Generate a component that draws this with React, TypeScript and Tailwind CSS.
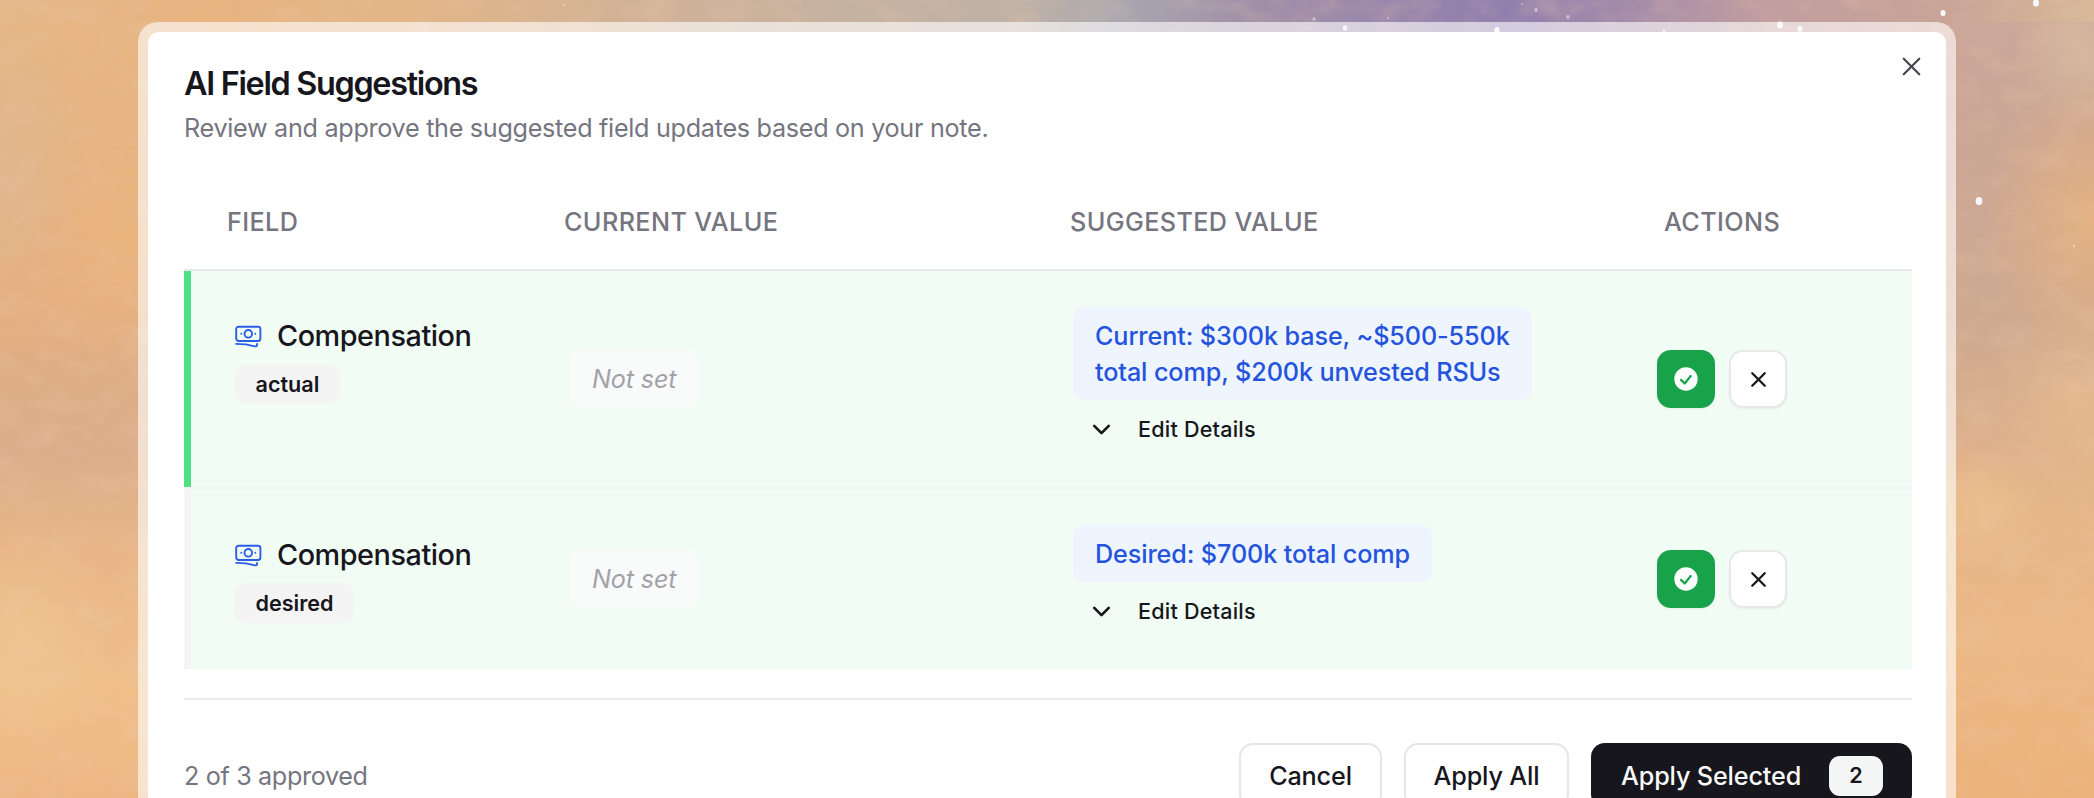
import React from "react";
import { ChevronDown, X } from "lucide-react";

const COLUMNS = "grid grid-cols-[380px_503px_584px_261px]";

type Suggestion = { tag: string; lines: string[]; selected: boolean };

const suggestions: Suggestion[] = [
  {
    tag: "actual",
    lines: ["Current: $300k base, ~$500-550k", "total comp, $200k unvested RSUs"],
    selected: true,
  },
  { tag: "desired", lines: ["Desired: $700k total comp"], selected: false },
];

const stars = [
  [1314, 19, 1.8, 0.5], [1345, 28, 2.8, 0.8], [1388, 18, 1.2, 0.4], [1497, 30, 3, 1], [1536, 10, 2, 0.5],
  [1568, 17, 2, 0.5], [1522, 4, 1, 0.4], [1664, 31, 1.8, 0.6], [1780, 25, 3.6, 1], [1800, 29, 2.8, 1],
  [1943, 13, 3, 1], [2036, 3, 3.6, 1], [1979, 201, 4, 1], [564, 5, 0.8, 1], [2074, 246, 1.5, 0.4],
];

function Backdrop() {
  return (
    <svg className="absolute inset-0" width="2094" height="798" viewBox="0 0 2094 798">
      <defs>
        <linearGradient id="top" x1="0" x2="1">
          <stop offset="0" stopColor="#e6b88a" />
          <stop offset="0.1" stopColor="#e7b37f" />
          <stop offset="0.19" stopColor="#e3b585" />
          <stop offset="0.3" stopColor="#d2b296" />
          <stop offset="0.4" stopColor="#c5b1a0" />
          <stop offset="0.49" stopColor="#bfb1a6" />
          <stop offset="0.53" stopColor="#a9a8b0" />
          <stop offset="0.6" stopColor="#a18fa8" />
          <stop offset="0.72" stopColor="#917fae" />
          <stop offset="0.79" stopColor="#a88ea8" />
          <stop offset="0.84" stopColor="#c09da0" />
          <stop offset="0.93" stopColor="#c8a498" />
          <stop offset="1" stopColor="#d8b594" />
        </linearGradient>
        <linearGradient id="left" x1="0" y1="0" x2="0" y2="1">
          <stop offset="0" stopColor="#e6b683" />
          <stop offset="0.35" stopColor="#e6b07f" />
          <stop offset="0.45" stopColor="#dfae86" />
          <stop offset="0.56" stopColor="#dcae8a" />
          <stop offset="0.68" stopColor="#e8b687" />
          <stop offset="0.85" stopColor="#efbf88" />
          <stop offset="1" stopColor="#edb783" />
        </linearGradient>
        <linearGradient id="right" x1="0" y1="0" x2="0" y2="1">
          <stop offset="0" stopColor="#cba699" />
          <stop offset="0.2" stopColor="#cba694" />
          <stop offset="0.4" stopColor="#cfaa90" />
          <stop offset="0.54" stopColor="#dcb08b" />
          <stop offset="0.63" stopColor="#e6b688" />
          <stop offset="0.8" stopColor="#ebb986" />
          <stop offset="1" stopColor="#ecb27a" />
        </linearGradient>
        <radialGradient id="amber">
          <stop offset="0" stopColor="#e9b47c" stopOpacity="0.8" />
          <stop offset="1" stopColor="#e9b47c" stopOpacity="0" />
        </radialGradient>
        <radialGradient id="pale">
          <stop offset="0" stopColor="#f0c590" stopOpacity="0.8" />
          <stop offset="1" stopColor="#f0c590" stopOpacity="0" />
        </radialGradient>
        <radialGradient id="sand">
          <stop offset="0" stopColor="#d6bb9e" stopOpacity="0.85" />
          <stop offset="1" stopColor="#d6bb9e" stopOpacity="0" />
        </radialGradient>
        <filter id="paper" x="0" y="0" width="100%" height="100%">
          <feTurbulence type="fractalNoise" baseFrequency="0.025 0.04" numOctaves="5" seed="7" />
          <feColorMatrix values="0 0 0 0 0.85  0 0 0 0 0.58  0 0 0 0 0.42  1.6 0 0 0 -0.7" />
        </filter>
      </defs>
      <rect width="2094" height="60" fill="url(#top)" />
      <rect y="22" width="160" height="776" fill="url(#left)" />
      <rect x="1934" y="22" width="160" height="776" fill="url(#right)" />
      <ellipse cx="0" cy="170" rx="90" ry="160" fill="url(#sand)" opacity="0.5" />
      <ellipse cx="120" cy="240" rx="80" ry="120" fill="url(#amber)" />
      <ellipse cx="20" cy="650" rx="90" ry="120" fill="url(#pale)" />
      <ellipse cx="2080" cy="50" rx="70" ry="80" fill="url(#sand)" />
      <ellipse cx="2094" cy="220" rx="110" ry="150" fill="url(#amber)" />
      <ellipse cx="2080" cy="400" rx="90" ry="100" fill="url(#pale)" opacity="0.6" />
      <ellipse cx="1980" cy="505" rx="60" ry="60" fill="url(#pale)" opacity="0.7" />
      <rect width="2094" height="798" filter="url(#paper)" opacity="0.35" />
      {stars.map(([x, y, r, opacity]) => (
        <ellipse key={`${x}-${y}`} cx={x} cy={y} rx={r * 0.85} ry={r} fill="#f8f8fc" opacity={opacity} />
      ))}
    </svg>
  );
}

function BanknotesIcon() {
  return (
    <svg
      className="h-[23px] w-[27px] text-[#2b5ce6]"
      viewBox="0 0 27 23"
      fill="none"
      stroke="currentColor"
      strokeWidth="1.9"
      strokeLinecap="round"
      strokeLinejoin="round"
    >
      <rect x="1.2" y="1.7" width="24.2" height="14.3" rx="2.4" />
      <circle cx="13.3" cy="8.8" r="3.8" />
      <path d="M6.3 8.8h.01M20.3 8.8h.01" />
      <path d="M1.2 18.9c6.9 0 13 .8 18.6 2.4 1.2.4 2.3-.4 2.3-1.6v-.8" />
    </svg>
  );
}

function CheckBadgeIcon() {
  return (
    <svg className="size-6" viewBox="0 0 24 24" fill="none">
      <circle cx="12" cy="12" r="11.7" fill="#ffffff" />
      <path
        d="M7 12.9l3.7 3.6 6-7.5"
        stroke="#18a34a"
        strokeWidth="2.2"
        strokeLinecap="round"
        strokeLinejoin="round"
      />
    </svg>
  );
}

function SuggestionRow({ item }: { item: Suggestion }) {
  return (
    <div
      className={`${COLUMNS} bg-[#f1fcf4] ${
        item.selected
          ? "h-[216px] shadow-[inset_7px_0_0_#4fe085]"
          : "h-[182px] border-t-2 border-[#f3f5f5] shadow-[inset_7px_0_0_#f3f5f5]"
      }`}
    >
      <div className={item.selected ? "pt-[45px] pl-[51px]" : "pt-[46px] pl-[51px]"}>
        <div className="flex h-10 items-center gap-[15px]">
          <BanknotesIcon />
          <span className="text-[28.8px] leading-10 font-medium tracking-[-0.45px]">Compensation</span>
        </div>
        <span className="mt-2 inline-flex h-10 items-center rounded-[11px] bg-[#f4f4f5] px-[20.5px] pt-px text-[21.6px] font-semibold">
          {item.tag}
        </span>
      </div>
      <div className="flex items-center pl-[6px]">
        <span className="flex h-[58px] items-center rounded-[11px] bg-[#f9fbfa] px-[22px] pt-[2px] text-[25.2px] tracking-[-0.15px] text-[#a2a2aa] italic">
          Not set
        </span>
      </div>
      <div className="flex flex-col items-start pt-9 pl-[6px]">
        <div className="rounded-[11px] bg-[#eef5ff] px-[22px] py-[10.5px] text-[25.2px] leading-9 font-medium tracking-[-0.11px] whitespace-nowrap text-[#2453de]">
          {item.lines.map((line) => (
            <div key={line}>{line}</div>
          ))}
        </div>
        <button className="mt-[11px] ml-[14px] flex h-9 items-center gap-[22px] text-[21.6px] leading-9 font-medium tracking-[0.2px]">
          <ChevronDown className="size-[29px]" strokeWidth={2.2} />
          Edit Details
        </button>
      </div>
      <div className="flex items-center gap-[14px] pl-[6px]">
        <button className="flex size-[58px] items-center justify-center rounded-[14px] bg-[#18a34a] text-white shadow-xs">
          <CheckBadgeIcon />
        </button>
        <button className="flex size-[58px] items-center justify-center rounded-[14px] border-2 border-[#e6e8e9] bg-white shadow-xs">
          <X className="size-[25px]" strokeWidth={2.2} />
        </button>
      </div>
    </div>
  );
}

export default function App() {
  return (
    <div className="relative h-[798px] w-[2094px] overflow-hidden bg-[#e6b586] font-['Inter',sans-serif] text-[#17161c]">
      <Backdrop />
      <main className="relative mt-[22px] ml-[138px] h-[860px] w-[1818px] rounded-[20px] bg-white/60 p-[10px]">
        <section className="relative h-full rounded-[11px] bg-white px-9 pt-[34px]">
          <button className="absolute top-[19px] right-[19px]" aria-label="Close">
            <X className="size-[31px] text-[#45454d]" strokeWidth={1.7} />
          </button>
          <h1 className="text-[32.4px] leading-9 font-semibold tracking-[-1.33px]">AI Field Suggestions</h1>
          <p className="mt-[8px] text-[25.2px] leading-9 tracking-[-0.3px] text-[#75757f]">
            Review and approve the suggested field updates based on your note.
          </p>
          <div className="mt-[58px] w-[1728px]">
            <div
              className={`${COLUMNS} h-[67px] border-b-2 border-[#e8e8ea] text-[25.2px] leading-9 font-medium tracking-[0.4px] text-[#75757f]`}
            >
              <span className="pl-[43px]">FIELD</span>
              <span>CURRENT VALUE</span>
              <span className="pl-[3px]">SUGGESTED VALUE</span>
              <span className="pl-[13px]">ACTIONS</span>
            </div>
            {suggestions.map((item) => (
              <SuggestionRow key={item.tag} item={item} />
            ))}
          </div>
          <footer className="mt-[29px] flex w-[1728px] items-center border-t-2 border-[#ebebec] pt-[43px] text-[25.2px] font-medium tracking-[-0.15px]">
            <span className="grow pt-[2px] font-normal tracking-[-0.36px] text-[#75757f]">2 of 3 approved</span>
            <button className="h-[65px] w-[143px] rounded-[14px] border-2 border-[#e6e6e9] pt-[2px]">Cancel</button>
            <button className="ml-[22px] h-[65px] w-[165px] rounded-[14px] border-2 border-[#e6e6e9] pt-[2px]">Apply All</button>
            <button className="ml-[22px] flex h-[65px] w-[321px] items-center justify-between rounded-[14px] bg-[#17161c] pr-[29px] pl-[30px] text-[#fafafa]">
              <span className="pt-[2px]">Apply Selected</span>
              <span className="flex h-10 w-[54px] items-center justify-center rounded-[11px] bg-[#f4f5f5] text-[21.6px] font-semibold text-[#17161c]">
                2
              </span>
            </button>
          </footer>
        </section>
      </main>
    </div>
  );
}
